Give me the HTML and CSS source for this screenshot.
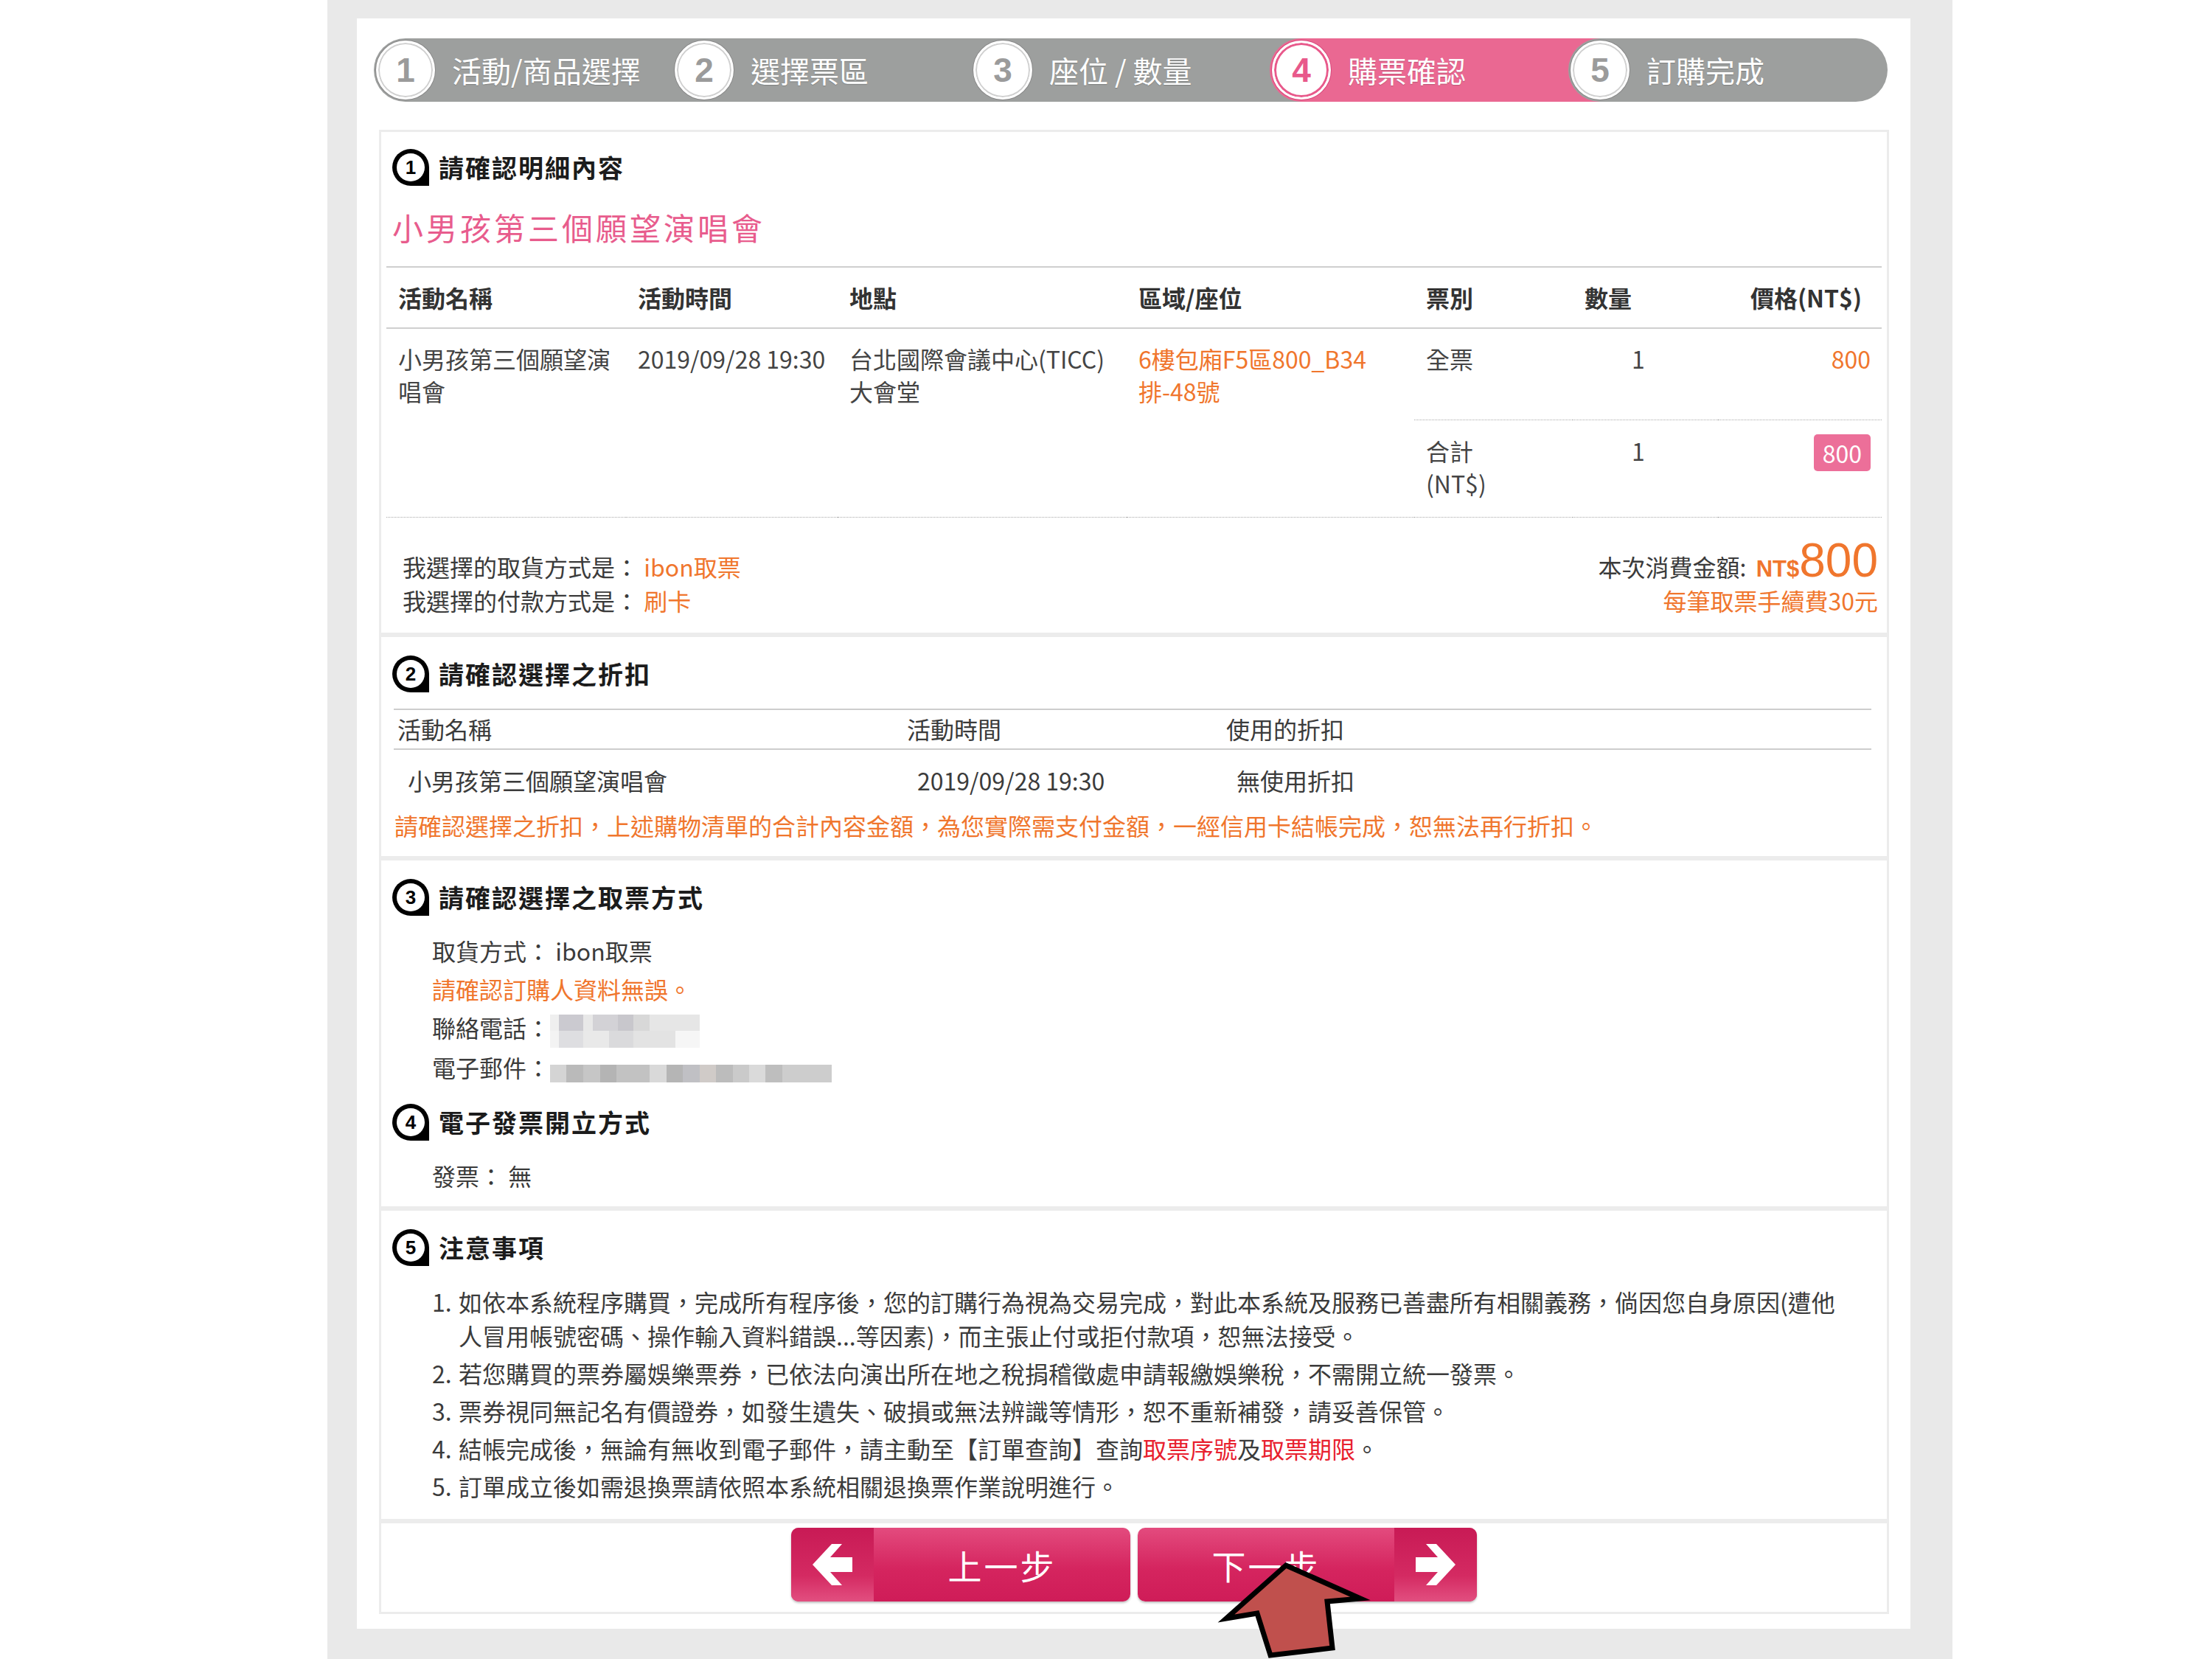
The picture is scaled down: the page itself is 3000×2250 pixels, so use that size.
FILE: index.html
```html
<!DOCTYPE html>
<html lang="zh-Hant">
<head>
    <meta charset="UTF-8">
    <title>購票確認</title>
    <link rel="stylesheet" href="styles.css">
</head>
<body>
<div class="page">
    <div class="panel">
        <div class="steps">
            <div class="step"><span class="num">1</span><span class="label">活動/商品選擇</span></div>
            <div class="step"><span class="num">2</span><span class="label">選擇票區</span></div>
            <div class="step"><span class="num">3</span><span class="label">座位 / 數量</span></div>
            <div class="step active"><span class="num">4</span><span class="label">購票確認</span></div>
            <div class="step last"><span class="num">5</span><span class="label">訂購完成</span></div>
        </div>

        <!-- 1. order detail -->
        <div class="box box-detail">
            <h2 class="heading">
                <svg class="icon" viewBox="0 0 50 50"><path d="M25 0A25 25 0 0 0 0 25A25 25 0 0 0 25 50H50V25A25 25 0 0 0 25 0Z"/><circle cx="25" cy="25" r="19" fill="#fff"/><text x="25" y="34" text-anchor="middle">1</text></svg>
                請確認明細內容
            </h2>
            <div class="event-title">小男孩第三個願望演唱會</div>

            <table class="detail">
                <colgroup>
                    <col style="width:325px"><col style="width:287px"><col style="width:392px"><col style="width:390px">
                    <col style="width:215px"><col style="width:197px"><col style="width:222px">
                </colgroup>
                <thead>
                    <tr>
                        <th>活動名稱</th><th>活動時間</th><th>地點</th><th>區域/座位</th>
                        <th>票別</th><th>數量</th><th class="right">價格(NT$)</th>
                    </tr>
                </thead>
                <tbody>
                    <tr class="item">
                        <td>小男孩第三個願望演<br>唱會</td>
                        <td>2019/09/28 19:30</td>
                        <td>台北國際會議中心(TICC)<br>大會堂</td>
                        <td class="orange">6樓包廂F5區800_B34<br>排-48號</td>
                        <td class="dot">全票</td>
                        <td class="dot qty">1</td>
                        <td class="dot right orange price">800</td>
                    </tr>
                    <tr class="sum">
                        <td></td><td></td><td></td><td></td>
                        <td>合計<br>(NT$)</td>
                        <td class="qty">1</td>
                        <td class="right price"><span class="badge">800</span></td>
                    </tr>
                </tbody>
            </table>

            <div class="pay">
                <div>
                    <div>我選擇的取貨方式是： <span class="orange">ibon取票</span></div>
                    <div>我選擇的付款方式是： <span class="orange">刷卡</span></div>
                </div>
                <div class="pay-total">
                    <div class="total-line">本次消費金額: <span class="nt">NT$</span><span class="amount">800</span></div>
                    <div class="orange">每筆取票手續費30元</div>
                </div>
            </div>
        </div>

        <!-- 2. discount -->
        <div class="box box-discount">
            <h2 class="heading">
                <svg class="icon" viewBox="0 0 50 50"><path d="M25 0A25 25 0 0 0 0 25A25 25 0 0 0 25 50H50V25A25 25 0 0 0 25 0Z"/><circle cx="25" cy="25" r="19" fill="#fff"/><text x="25" y="34" text-anchor="middle">2</text></svg>
                請確認選擇之折扣
            </h2>
            <table class="discount">
                <colgroup><col style="width:691px"><col style="width:433px"><col></colgroup>
                <thead>
                    <tr><th>活動名稱</th><th>活動時間</th><th>使用的折扣</th></tr>
                </thead>
                <tbody>
                    <tr><td>小男孩第三個願望演唱會</td><td>2019/09/28 19:30</td><td>無使用折扣</td></tr>
                </tbody>
            </table>
            <p class="notice orange">請確認選擇之折扣，上述購物清單的合計內容金額，為您實際需支付金額，一經信用卡結帳完成，恕無法再行折扣。</p>
        </div>

        <!-- 3 + 4. pickup / invoice -->
        <div class="box box-pickup">
            <h2 class="heading">
                <svg class="icon" viewBox="0 0 50 50"><path d="M25 0A25 25 0 0 0 0 25A25 25 0 0 0 25 50H50V25A25 25 0 0 0 25 0Z"/><circle cx="25" cy="25" r="19" fill="#fff"/><text x="25" y="34" text-anchor="middle">3</text></svg>
                請確認選擇之取票方式
            </h2>
            <div class="info">
                <div>取貨方式： ibon取票</div>
                <div class="orange">請確認訂購人資料無誤。</div>
                <div>聯絡電話：<span class="blur blur-phone"></span></div>
                <div>電子郵件：<span class="blur blur-mail"></span></div>
            </div>
            <h2 class="heading sub">
                <svg class="icon" viewBox="0 0 50 50"><path d="M25 0A25 25 0 0 0 0 25A25 25 0 0 0 25 50H50V25A25 25 0 0 0 25 0Z"/><circle cx="25" cy="25" r="19" fill="#fff"/><text x="25" y="34" text-anchor="middle">4</text></svg>
                電子發票開立方式
            </h2>
            <div class="info">
                <div>發票： 無</div>
            </div>
        </div>

        <!-- 5. notes -->
        <div class="box box-notes">
            <h2 class="heading">
                <svg class="icon" viewBox="0 0 50 50"><path d="M25 0A25 25 0 0 0 0 25A25 25 0 0 0 25 50H50V25A25 25 0 0 0 25 0Z"/><circle cx="25" cy="25" r="19" fill="#fff"/><text x="25" y="34" text-anchor="middle">5</text></svg>
                注意事項
            </h2>
            <ol class="notes">
                <li><span class="n">1.</span><span>如依本系統程序購買，完成所有程序後，您的訂購行為視為交易完成，對此本系統及服務已善盡所有相關義務，倘因您自身原因(遭他人冒用帳號密碼、操作輸入資料錯誤...等因素)，而主張止付或拒付款項，恕無法接受。</span></li>
                <li><span class="n">2.</span><span>若您購買的票券屬娛樂票券，已依法向演出所在地之稅捐稽徵處申請報繳娛樂稅，不需開立統一發票。</span></li>
                <li><span class="n">3.</span><span>票券視同無記名有價證券，如發生遺失、破損或無法辨識等情形，恕不重新補發，請妥善保管。</span></li>
                <li><span class="n">4.</span><span>結帳完成後，無論有無收到電子郵件，請主動至【訂單查詢】查詢<span class="red">取票序號</span>及<span class="red">取票期限</span>。</span></li>
                <li><span class="n">5.</span><span>訂單成立後如需退換票請依照本系統相關退換票作業說明進行。</span></li>
            </ol>
        </div>

        <!-- actions -->
        <div class="box box-actions">
            <a class="btn">
                <span class="cap"><svg width="54" height="58" viewBox="0 0 54 58"><path d="M0 29L26 1H40L24 19H54V39H24L40 57H26Z" fill="#fff"/></svg></span>
                <span class="btn-text">上一步</span>
            </a>
            <a class="btn">
                <span class="btn-text">下一步</span>
                <span class="cap"><svg width="54" height="58" viewBox="0 0 54 58"><path d="M54 29L28 1H14L30 19H0V39H30L14 57H28Z" fill="#fff"/></svg></span>
            </a>
        </div>
    </div>

    <!-- red pointer drawn over the next button -->
    <svg class="pointer" width="210" height="145" viewBox="0 0 210 145">
        <polygon points="94,18 195,63 150,67 157,130 73,140 55,83 13,90" fill="#c0504d" stroke="#000" stroke-width="7" stroke-linejoin="miter"/>
    </svg>
</div>
</body>
</html>
```

FILE: styles.css
```css
* {
    box-sizing: border-box;
}

body {
    margin: 0;
    background: #fff;
    font-family: "Noto Sans CJK TC", "Noto Sans", sans-serif;
    font-size: 32px;
    color: #3b3b3b;
}

.page {
    position: relative;
    width: 2204px;
    height: 2250px;
    margin-left: 444px;
    padding: 25px 57px 0 40px;
    background: #e9e9e9;
}

.panel {
    background: #fff;
    padding: 27px 29px 20px 30px;
}

/* step bar */
.steps {
    display: flex;
    height: 86px;
    margin: 0 2px 0 -7px;
}

.step {
    flex: none;
    display: flex;
    align-items: center;
    width: 448px;
    height: 86px;
    margin-left: -43px;
    border-radius: 43px 0 0 43px;
    background: #9d9f9e;
}

.step:first-child {
    margin-left: 0;
}

.step.last {
    width: 433px;
    border-radius: 43px;
}

.step.active {
    background: #ea6892;
}

.num {
    flex: none;
    display: flex;
    align-items: center;
    justify-content: center;
    width: 80px;
    height: 80px;
    margin-left: 3px;
    border: 3px solid #fff;
    border-radius: 50%;
    background: #fff;
    box-shadow: inset 0 0 0 2px #d0d0d0, 0 0 0 1px #888;
    font: bold 46px "Liberation Sans", sans-serif;
    color: #9b9b9b;
}

.step.active .num {
    color: #e8598b;
    box-shadow: inset 0 0 0 3px #e8598b, 0 0 0 1px #d9457a;
}

.label {
    margin-left: 23px;
    font-size: 40px;
    color: #fff;
    text-shadow: 0 1px 1px rgba(0, 0, 0, 0.2);
    white-space: nowrap;
}

/* section boxes */
.box {
    border: 3px solid #ececec;
}

.heading {
    display: flex;
    align-items: center;
    gap: 13px;
    margin: 0 0 0 15px;
    font-size: 34px;
    font-weight: 700;
    letter-spacing: 2px;
    line-height: 50px;
    color: #1c1c1c;
}

.icon {
    flex: none;
    width: 50px;
    height: 50px;
}

.icon text {
    font: bold 26px "Liberation Sans", sans-serif;
    fill: #000;
    letter-spacing: 0;
}

.orange {
    color: #f0762d;
}

.red {
    color: #e8202e;
}

.right {
    text-align: right;
}

/* 1. detail */
.box-detail {
    margin-top: 38px;
    padding-top: 23px;
}

.event-title {
    margin: 31px 0 0 15px;
    font-size: 42px;
    letter-spacing: 4px;
    line-height: 50px;
    color: #e85c8d;
}

.detail {
    width: 2028px;
    margin: 28px 7px 0;
    border-collapse: separate;
    border-spacing: 0;
    table-layout: fixed;
    border-top: 2px solid #cfcfcf;
    line-height: 44px;
}

.detail th {
    padding: 18px 16px 19px;
    border-bottom: 2px solid #cfcfcf;
    text-align: left;
    font-weight: 700;
    color: #333;
}

.detail th.right {
    text-align: right;
    padding-right: 27px;
}

.detail td {
    padding: 18px 16px;
    vertical-align: top;
    color: #444;
}

.detail td.qty {
    padding-left: 80px;
}

.detail td.price {
    padding-right: 15px;
}

.detail td.orange {
    color: #f0762d;
}

.detail .dot {
    border-bottom: 1px dotted #a8a8a8;
}

.detail .sum td {
    padding-top: 19px;
    padding-bottom: 24px;
    border-bottom: 1px dotted #a8a8a8;
}

.badge {
    display: inline-block;
    vertical-align: top;
    padding: 0 12px;
    border-radius: 5px;
    background: #ec6f99;
    color: #fff;
    line-height: 50px;
}

.pay {
    display: flex;
    justify-content: space-between;
    padding: 43px 12px 21px 29px;
    line-height: 46px;
}

.pay-total {
    text-align: right;
}

.total-line {
    height: 46px;
}

.nt {
    font: bold 31px "Liberation Sans", sans-serif;
    color: #f0762d;
    margin-left: 6px;
}

.amount {
    font: 64px "Liberation Sans", sans-serif;
    line-height: 30px;
    color: #f0762d;
}

/* 2. discount */
.box-discount {
    padding-top: 25px;
    padding-bottom: 20px;
}

.discount {
    width: 2004px;
    margin: 22px 21px 0 17px;
    border-collapse: separate;
    border-spacing: 0;
    table-layout: fixed;
    border-top: 2px solid #cdcdcd;
    line-height: 44px;
}

.discount th {
    padding: 3px 5px 5px;
    border-bottom: 2px solid #cdcdcd;
    text-align: left;
    font-weight: 400;
    color: #3b3b3b;
}

.discount td {
    padding: 19px 19px 0;
    color: #3b3b3b;
}

.notice {
    margin: 17px 0 0 18px;
    line-height: 44px;
}

/* 3 + 4. pickup / invoice */
.box-pickup {
    padding-top: 25px;
    padding-bottom: 16px;
}

.info {
    margin: 21px 0 0 69px;
    line-height: 52px;
}

.heading.sub {
    margin-top: 24px;
}

.blur {
    display: inline-block;
    vertical-align: middle;
}

.blur-phone {
    width: 203px;
    height: 45px;
    background:
        linear-gradient(90deg, #efefef 0 12px, #cbcad0 12px 45px, #e8e8e8 45px 58px, #d3d2d6 58px 92px, #c8c7cc 92px 113px, #d8d8d8 113px 135px, #e6e6e6 135px 203px) 0 0 / 100% 22px no-repeat,
        linear-gradient(90deg, #f3f3f3 0 12px, #dedee1 12px 45px, #e9e9e9 45px 80px, #dadadc 80px 113px, #e3e3e3 113px 170px, #f6f6f6 170px 203px) 0 22px / 100% 23px no-repeat;
}

.blur-mail {
    width: 382px;
    height: 24px;
    margin-top: 8px;
    background: linear-gradient(90deg, #d4d4d4 0 22px, #bababa 22px 45px, #c6c6c6 45px 68px, #b4b4b4 68px 90px, #c2c2c2 90px 135px, #d9d9d9 135px 158px, #b5b5b5 158px 180px, #c0c0c4 180px 203px, #d0cbc8 203px 225px, #bcbcbc 225px 248px, #cacaca 248px 270px, #dadada 270px 292px, #bebebe 292px 315px, #cdcdcd 315px 382px);
}

/* 5. notes */
.box-notes {
    padding-top: 25px;
    padding-bottom: 22px;
}

.notes {
    list-style: none;
    margin: 25px 54px 0 69px;
    padding: 0;
    line-height: 46px;
}

.notes li {
    display: flex;
}

.notes li + li {
    margin-top: 5px;
}

.notes .n {
    flex: none;
    width: 36px;
}

/* actions */
.box-actions {
    display: flex;
    justify-content: center;
    gap: 10px;
    padding: 6px 0 14px;
}

.btn {
    display: flex;
    width: 460px;
    height: 100px;
    border-radius: 10px;
    overflow: hidden;
    background: linear-gradient(#e34b7e, #d5255f 55%, #cf1c58);
    box-shadow: 0 2px 3px rgba(0, 0, 0, 0.25);
    color: #fff;
    text-decoration: none;
}

.cap {
    flex: none;
    display: flex;
    align-items: center;
    justify-content: center;
    width: 112px;
    background: linear-gradient(#c81a55, #d42a62 65%, #e24f80);
}

.btn-text {
    flex: 1;
    text-align: center;
    font-size: 46px;
    letter-spacing: 3px;
    line-height: 100px;
}

.pointer {
    position: absolute;
    left: 1206px;
    top: 2105px;
}
```
